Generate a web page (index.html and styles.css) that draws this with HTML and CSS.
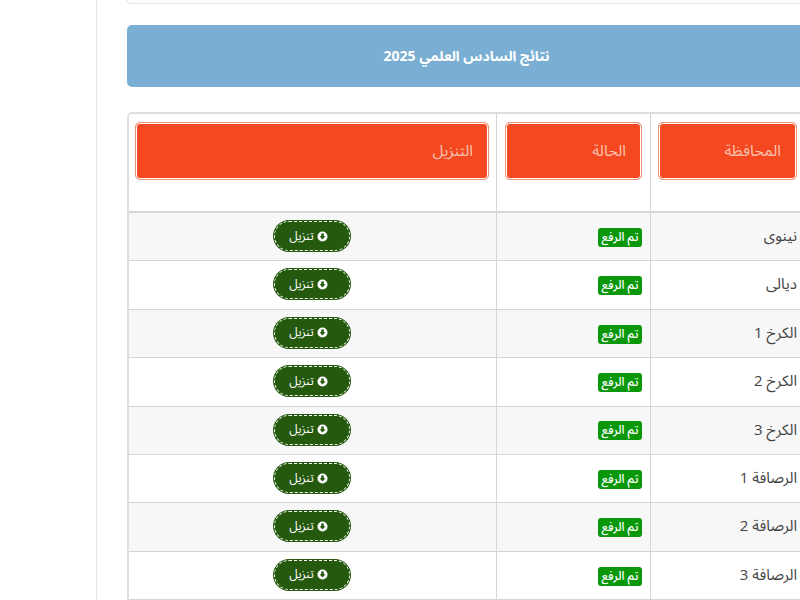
FILE: index.html
```html
<!DOCTYPE html>
<html lang="ar">
<head>
<meta charset="utf-8">
<title>نتائج السادس العلمي 2025</title>
<link rel="stylesheet" href="styles.css">
</head>
<body>
<main class="page">
  <div class="top-card"></div>
  <div class="banner" dir="rtl"><strong>نتائج السادس العلمي 2025</strong></div>
  <table class="results" dir="rtl">
    <thead>
      <tr>
        <th class="col-prov"><span class="th-btn">المحافظة</span></th>
        <th class="col-status"><span class="th-btn">الحالة</span></th>
        <th class="col-dl"><span class="th-btn">التنزيل</span></th>
      </tr>
    </thead>
    <tbody>
      <tr><td class="prov">نينوى</td><td class="status"><span class="badge">تم الرفع</span></td><td class="dl"><a class="btn" href="#"><svg class="ico" viewBox="0 0 12 12"><circle cx="6" cy="6" r="5.5" fill="#fff"/><path d="M4.6 2.8h2.8v3h1.9L6 9.4 2.7 5.8h1.9z" fill="#255a0e"/></svg> تنزيل</a></td></tr>
      <tr><td class="prov">ديالى</td><td class="status"><span class="badge">تم الرفع</span></td><td class="dl"><a class="btn" href="#"><svg class="ico" viewBox="0 0 12 12"><circle cx="6" cy="6" r="5.5" fill="#fff"/><path d="M4.6 2.8h2.8v3h1.9L6 9.4 2.7 5.8h1.9z" fill="#255a0e"/></svg> تنزيل</a></td></tr>
      <tr><td class="prov">الكرخ 1</td><td class="status"><span class="badge">تم الرفع</span></td><td class="dl"><a class="btn" href="#"><svg class="ico" viewBox="0 0 12 12"><circle cx="6" cy="6" r="5.5" fill="#fff"/><path d="M4.6 2.8h2.8v3h1.9L6 9.4 2.7 5.8h1.9z" fill="#255a0e"/></svg> تنزيل</a></td></tr>
      <tr><td class="prov">الكرخ 2</td><td class="status"><span class="badge">تم الرفع</span></td><td class="dl"><a class="btn" href="#"><svg class="ico" viewBox="0 0 12 12"><circle cx="6" cy="6" r="5.5" fill="#fff"/><path d="M4.6 2.8h2.8v3h1.9L6 9.4 2.7 5.8h1.9z" fill="#255a0e"/></svg> تنزيل</a></td></tr>
      <tr><td class="prov">الكرخ 3</td><td class="status"><span class="badge">تم الرفع</span></td><td class="dl"><a class="btn" href="#"><svg class="ico" viewBox="0 0 12 12"><circle cx="6" cy="6" r="5.5" fill="#fff"/><path d="M4.6 2.8h2.8v3h1.9L6 9.4 2.7 5.8h1.9z" fill="#255a0e"/></svg> تنزيل</a></td></tr>
      <tr><td class="prov">الرصافة 1</td><td class="status"><span class="badge">تم الرفع</span></td><td class="dl"><a class="btn" href="#"><svg class="ico" viewBox="0 0 12 12"><circle cx="6" cy="6" r="5.5" fill="#fff"/><path d="M4.6 2.8h2.8v3h1.9L6 9.4 2.7 5.8h1.9z" fill="#255a0e"/></svg> تنزيل</a></td></tr>
      <tr><td class="prov">الرصافة 2</td><td class="status"><span class="badge">تم الرفع</span></td><td class="dl"><a class="btn" href="#"><svg class="ico" viewBox="0 0 12 12"><circle cx="6" cy="6" r="5.5" fill="#fff"/><path d="M4.6 2.8h2.8v3h1.9L6 9.4 2.7 5.8h1.9z" fill="#255a0e"/></svg> تنزيل</a></td></tr>
      <tr><td class="prov">الرصافة 3</td><td class="status"><span class="badge">تم الرفع</span></td><td class="dl"><a class="btn" href="#"><svg class="ico" viewBox="0 0 12 12"><circle cx="6" cy="6" r="5.5" fill="#fff"/><path d="M4.6 2.8h2.8v3h1.9L6 9.4 2.7 5.8h1.9z" fill="#255a0e"/></svg> تنزيل</a></td></tr>
    </tbody>
  </table>
</main>
</body>
</html>
```

FILE: styles.css
```css
html, body {
  margin: 0;
  height: 600px;
  overflow: hidden;
  background: #fff;
}
body {
  font-family: "Open Sans", "Noto Sans Arabic", "Noto Sans", sans-serif;
  font-size: 14px;
  color: #333;
}
.page {
  margin-left: 96px;
  width: 704px;
  height: 600px;
  box-sizing: border-box;
  border-left: 1px solid #e6e6e6;
  padding-left: 30px;
  overflow: hidden;
}
.top-card {
  width: 679px;
  height: 3px;
  border: 1px solid #e4e4e4;
  border-top: 0;
  border-radius: 0 0 10px 10px;
}
.banner {
  width: 679px;
  margin-top: 21px;
  height: 62px;
  background: #7aafd3;
  border-radius: 5px;
  color: #fff;
  font-size: 14px;
  line-height: 61px;
  text-align: center;
}
.results {
  margin-top: 25px;
  width: 679px;
  table-layout: fixed;
  border-collapse: separate;
  border-spacing: 0;
  border: 2px solid #dedede;
  border-radius: 5px 5px 0 0;
}
.results th, .results td {
  box-sizing: border-box;
  text-align: right;
}
.results th {
  height: 99px;
  vertical-align: top;
  padding-top: 8px;
  padding-bottom: 0;
  border-bottom: 2px solid #d6d6d6;
  font-weight: 400;
}
.results .col-prov {
  width: 154px;
  padding-left: 7px;
  padding-right: 7px;
  border-left: 1px solid #d6d6d6;
}
.results .col-status {
  width: 154px;
  padding-left: 8px;
  padding-right: 8px;
  border-left: 1px solid #d6d6d6;
}
.results .col-dl {
  padding-left: 6px;
  padding-right: 7px;
}
.th-btn {
  display: block;
  box-sizing: border-box;
  height: 58px;
  line-height: 55px;
  padding-right: 15px;
  background: #f44820;
  color: #f9c3b2;
  border: 1px solid #ee917a;
  box-shadow: inset 0 0 0 1px #fff;
  border-radius: 5px;
  font-size: 15.5px;
}
.results td {
  height: 48.4px;
  font-size: 15px;
  color: #444;
  border-bottom: 1px solid #d6d6d6;
  padding-top: 0;
  padding-bottom: 1.2px;
}
.results .prov {
  padding-left: 7px;
  padding-right: 7px;
  border-left: 1px solid #d6d6d6;
}
.results .status {
  padding-left: 8px;
  padding-right: 8px;
  border-left: 1px solid #d6d6d6;
}
.results tbody tr:nth-child(odd) td { background: #f7f7f7; }
.badge {
  display: inline-block;
  box-sizing: border-box;
  width: 44px;
  height: 19px;
  line-height: 18px;
  background: #0a980a;
  color: #fff;
  border-radius: 3px;
  font-size: 12px;
  font-weight: 500;
  white-space: nowrap;
  text-align: center;
  vertical-align: middle;
}
.results td.dl {
  text-align: center;
  padding-left: 0;
  padding-right: 1px;
}
.btn {
  display: inline-flex;
  align-items: center;
  justify-content: center;
  gap: 3px;
  width: 76px;
  height: 30px;
  padding-right: 7px;
  box-sizing: border-box;
  background: #255a0e;
  color: #fff;
  border-radius: 15px;
  border: 1px dashed #fff;
  box-shadow: 0 0 0 1px #255a0e;
  font-size: 12px;
  text-decoration: none;
  vertical-align: middle;
  white-space: nowrap;
}
.ico { width: 11px; height: 11px; }
```
